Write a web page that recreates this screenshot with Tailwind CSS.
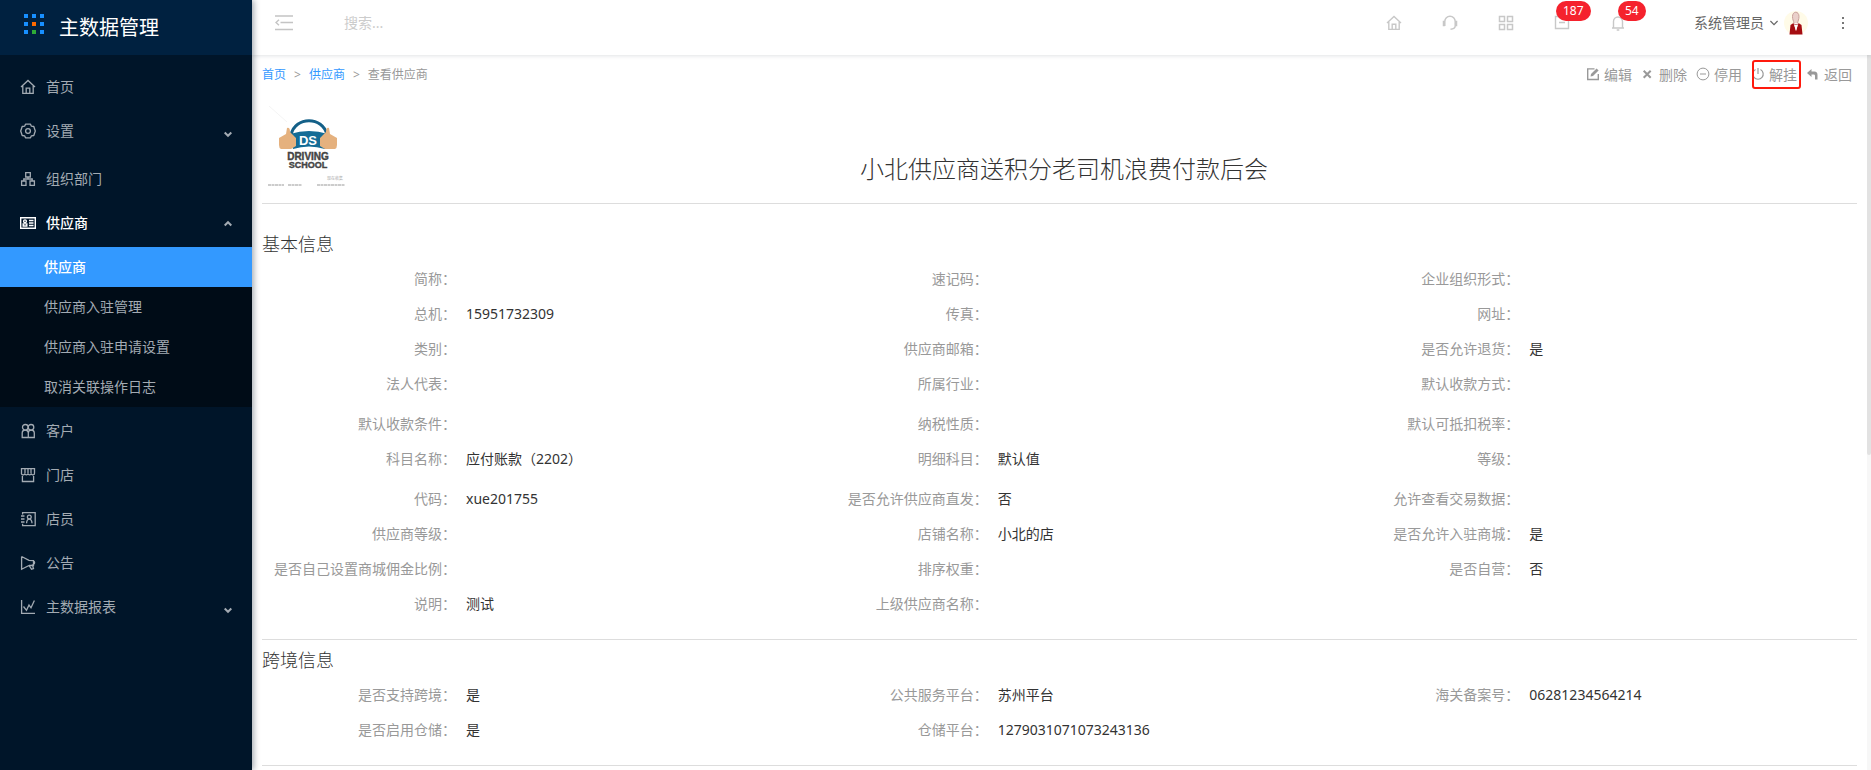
<!DOCTYPE html>
<html lang="zh-CN">
<head>
    <meta charset="utf-8">
    <title>主数据管理</title>
    <meta name="viewport" content="width=device-width, initial-scale=1">
    <script src="https://cdn.jsdelivr.net/npm/@tailwindcss/browser@4"></script>
</head>
<body class="flex h-screen overflow-hidden bg-white font-['Noto_Sans','Noto_Sans_CJK_SC',sans-serif] text-[14px] text-[#333]">

    <!-- sidebar -->
    <aside class="z-20 flex w-[252px] shrink-0 flex-col bg-[#001529] text-[#a3abb3] shadow-[2px_0_6px_rgba(0,21,41,0.35)]">
        <div class="flex h-[55px] items-center gap-[15px] bg-[#002140] pl-6 text-[20px] text-white">
            <svg class="mb-2 h-5 w-5" viewBox="0 0 20 20" fill="#1890ff">
                <path d="M0 0h4v4H0zM8 0h4v4H8zM16 0h4v4h-4zM0 8h4v4H0zM16 8h4v4h-4zM0 16h4v4H0zM16 16h4v4h-4z"/>
                <path d="M8 8h4v4H8z" fill="#ff6a00"/>
                <path d="M8 16h4v4H8z" fill="#2eab37"/>
            </svg>
            <h1>主数据管理</h1>
        </div>
        <nav class="pt-[10px] [&_a]:flex [&_a]:items-center [&_a]:pb-[2px]">
            <a href="#" class="h-11 gap-[10px] pl-5">
                <svg class="mt-[2px] h-4 w-4" viewBox="0 0 16 16" fill="none" stroke="currentColor" stroke-width="1.3"><path d="M1 8l7-6.5L15 8M2.8 7v7.4h10.4V7M6.2 14V9.2h3.6V14"/></svg>
                首页
            </a>
            <a href="#" class="h-11 gap-[10px] pl-5 pr-5">
                <svg class="mt-[2px] h-4 w-4" viewBox="0 0 16 16" fill="none" stroke="currentColor" stroke-width="1.3"><path d="M5.5 1.2h5l.9 2 2.4.3 1.500 4.500-1.500 4.500-2.400.3-.9 2h-5l-.9-2-2.400-.3L.7 8l1.500-4.500 2.400-.3z" stroke-linejoin="round"/><circle cx="8" cy="8" r="2.400"/></svg>
                设置
                <svg class="ml-auto mt-2 h-2 w-2" viewBox="0 0 8 8" fill="none" stroke="currentColor" stroke-width="2"><path d="M.7 2.500L4 5.800l3.300-3.300"/></svg>
            </a>
            <a href="#" class="mt-1 h-11 gap-[10px] pl-5">
                <svg class="mt-[2px] h-4 w-4" viewBox="0 0 16 16" fill="none" stroke="currentColor" stroke-width="1.300"><path d="M5.700 1.600h4.600v4.400H5.700zM1.600 10h4.400v4.400H1.600zM10 10h4.400v4.400H10zM8 6v2M3.800 10V8h8.400v2"/></svg>
                组织部门
            </a>
            <a href="#" class="h-11 gap-[10px] pl-5 pr-5 font-medium text-white">
                <svg class="mt-[2px] h-4 w-4" viewBox="0 0 16 16" fill="none" stroke="currentColor" stroke-width="1.400"><path d="M.7 2.700h14.600v10.600H.7zM9 5.500h4.500M9 8h4.500M9 10.500h4.500"/><circle cx="5" cy="6.300" r="1.400"/><path d="M3.200 11V8.900h3.600V11z"/></svg>
                供应商
                <svg class="ml-auto mt-1 h-2 w-2" viewBox="0 0 8 8" fill="none" stroke="#a3abb3" stroke-width="2"><path d="M.7 5.500L4 2.200l3.300 3.300"/></svg>
            </a>
            <div class="my-[2px] bg-[#000c17] [&>a]:h-10 [&>a]:pl-11">
                <a href="#" class="bg-[#3399ff] font-medium text-white">供应商</a>
                <a href="#">供应商入驻管理</a>
                <a href="#">供应商入驻申请设置</a>
                <a href="#">取消关联操作日志</a>
            </div>
            <a href="#" class="h-11 gap-[10px] pl-5">
                <svg class="mt-[2px] h-4 w-4" viewBox="0 0 16 16" fill="none" stroke="currentColor" stroke-width="1.300"><circle cx="5.300" cy="4.300" r="2.800"/><circle cx="11" cy="4.300" r="2.800"/><path d="M2.200 14.500V10c0-1.800 1.200-2.800 2.900-2.800S8.300 8.200 8.300 10v4.500zM8.300 14.500h6V10c0-1.800-1.400-2.800-3-2.800S8.300 8.200 8.300 10"/></svg>
                客户
            </a>
            <a href="#" class="h-11 gap-[10px] pl-5">
                <svg class="mt-[2px] h-4 w-4" viewBox="0 0 16 16" fill="none" stroke="currentColor" stroke-width="1.300"><path d="M1.500 1.600h13v4.200a1.600 1.600 0 0 1-3.200.8 1.700 1.700 0 0 1-3.300 0 1.700 1.700 0 0 1-3.300 0 1.600 1.600 0 0 1-3.200-.8zM5 1.600v4.600M8 1.600v4.600M11 1.600v4.600M2.400 9v5.500h11.200V9"/></svg>
                门店
            </a>
            <a href="#" class="h-11 gap-[10px] pl-5">
                <svg class="mt-[2px] h-4 w-4" viewBox="0 0 16 16" fill="none" stroke="currentColor" stroke-width="1.300"><path d="M2.600 3.500V1.600h12.600v13H2.600v-1.900M1 5h3.500M1 8h3.500M1 11h3.500"/><circle cx="9.300" cy="6" r="1.900"/><path d="M6.600 12.300c0-5.600 5.400-5.600 5.400 0"/></svg>
                店员
            </a>
            <a href="#" class="h-11 gap-[10px] pl-5">
                <svg class="mt-[2px] h-4 w-4" viewBox="0 0 16 16" fill="none" stroke="currentColor" stroke-width="1.300"><path d="M1.600 1.500v12.800L9 10.500l2.500 3.700 2-.6-1.300-4.200M1.600 1.500L9 5.300l4.500.2v5l-4.500 0M13.500 6.200c1.500.6 1.500 2.600 0 3.200"/></svg>
                公告
            </a>
            <a href="#" class="h-11 gap-[10px] pl-5 pr-5">
                <svg class="mt-[2px] h-4 w-4" viewBox="0 0 16 16" fill="none" stroke="currentColor" stroke-width="1.300"><path d="M1.600 1v13.300H15M3.500 7.500l3 3.800L9 6l2 2.800 3.400-7.300"/></svg>
                主数据报表
                <svg class="ml-auto mt-2 h-2 w-2" viewBox="0 0 8 8" fill="none" stroke="currentColor" stroke-width="2"><path d="M.7 2.500L4 5.800l3.300-3.300"/></svg>
            </a>
        </nav>
    </aside>

    <div class="flex min-w-0 flex-1 flex-col">
        <!-- top bar -->
        <header class="z-10 flex h-[55px] shrink-0 items-center bg-white pb-[10px] pl-[23px] pr-5 shadow-[0_1px_4px_rgba(0,21,41,0.12)]">
            <button type="button" aria-label="收起菜单" class="text-[#c4c4c4]">
                <svg class="h-4 w-[18px]" viewBox="0 0 18 16" fill="none" stroke="currentColor" stroke-width="1.400"><path d="M0 1h18M5.500 7.500H18M0 14.500h18M4 4.800L1 7.500l3 2.700"/></svg>
            </button>
            <input type="text" aria-label="搜索" placeholder="搜索..." class="ml-[51px] w-60 outline-none placeholder:text-[#ccc]">
            <div class="ml-auto flex text-[#c8c8c8] [&>button]:relative [&>button]:flex [&>button]:h-10 [&>button]:w-14 [&>button]:items-center [&>button]:justify-center">
                <button type="button" aria-label="首页">
                    <svg class="h-4 w-4" viewBox="0 0 16 16" fill="none" stroke="currentColor" stroke-width="1.400"><path d="M1 8l7-6.500L15 8M2.800 7v7.400h10.400V7M6.200 14V9.200h3.600V14"/></svg>
                </button>
                <button type="button" aria-label="客服">
                    <svg class="h-4 w-4" viewBox="0 0 16 16" fill="none" stroke="currentColor" stroke-width="1.500"><path d="M2.800 11V6.500a5.200 5.200 0 0 1 10.400 0V11c0 2-1.500 3-4.700 3.300M2.800 6.600H1.500v3.800h1.300M13.200 6.600h1.300v3.800h-1.300"/></svg>
                </button>
                <button type="button" aria-label="应用">
                    <svg class="h-4 w-4" viewBox="0 0 16 16" fill="none" stroke="currentColor" stroke-width="1.500"><path d="M1.500 1.500h5v5h-5zM9.500 1.500h5v5h-5zM1.500 9.500h5v5h-5zM9.500 9.500h5v5h-5z"/></svg>
                </button>
                <button type="button" aria-label="消息 187">
                    <svg class="h-4 w-4" viewBox="0 0 16 16" fill="none" stroke="currentColor" stroke-width="1.400"><path d="M1.500 1.500h13v12h-13zM5 7.500h6"/></svg>
                    <span class="absolute -top-[2px] left-[22px] h-5 rounded-full bg-[#f5222d] px-[7px] text-[12px] leading-5 text-white">187</span>
                </button>
                <button type="button" aria-label="通知 54">
                    <svg class="h-4 w-4" viewBox="0 0 16 16" fill="none" stroke="currentColor" stroke-width="1.400"><path d="M2 13h12M3.500 13V6.500a4.500 4.500 0 0 1 9 0V13M6.700 15h2.600"/></svg>
                    <span class="absolute -top-[2px] left-7 h-5 rounded-full bg-[#f5222d] px-[7px] text-[12px] leading-5 text-white">54</span>
                </button>
            </div>
            <button type="button" class="ml-12 flex items-center text-[#666]">
                系统管理员
                <svg class="ml-[6px] h-2 w-2" viewBox="0 0 8 8" fill="none" stroke="currentColor" stroke-width="1.200"><path d="M.4 2L4 5.600 7.600 2"/></svg>
                <svg class="ml-[6px] h-6 w-6" viewBox="0 0 24 24">
                    <circle cx="12" cy="12" r="12" fill="#fffbe8"/>
                    <path d="M8.500 5.500C8.500-.2 15-.2 15 5.500c0 3-1 4-1.500 7h-3.500c-.5-3-1.500-4-1.500-7z" fill="#ead0ca" stroke="#c9a09a"/>
                    <path d="M9.500 12l-3 2-1 9.500h13l-1-9.500-3-2-2.500 8z" fill="#a50d12"/>
                    <path d="M9.800 12h4.400L12 20z" fill="#fff"/>
                    <path d="M10.500 12.500l3 1.500v-1.500l-3 1.500z" fill="#a50d12"/>
                </svg>
            </button>
            <button type="button" aria-label="更多" class="ml-[27px] text-[#777]">
                <svg class="h-4 w-4" viewBox="0 0 16 16" fill="currentColor"><path d="M7 2h2v2H7zM7 7h2v2H7zM7 12h2v2H7z"/></svg>
            </button>
        </header>

        <div class="flex min-h-0 flex-1">
            <main class="min-w-0 flex-1 overflow-hidden pl-[10px] pr-[10px]">
                <div class="flex h-[38px] items-center justify-between text-[#999]">
                    <nav class="flex items-center pt-[2px] text-[12px]">
                        <a href="#" class="text-[#3399ff]">首页</a>
                        <span class="mx-2">&gt;</span>
                        <a href="#" class="text-[#3399ff]">供应商</a>
                        <span class="mx-2">&gt;</span>
                        <span>查看供应商</span>
                    </nav>
                    <div class="flex gap-[9px] pr-[5px] [&>button]:relative [&>button]:flex [&>button]:items-center [&>button]:gap-1">
                        <button type="button">
                            <svg class="h-[14px] w-[14px]" viewBox="0 0 14 14" fill="none" stroke="currentColor" stroke-width="1.400"><path d="M8.500 1.900H1.700v10.600h10.600V7"/><path d="M5 7l5.600-5.600 2 2L7 9l-2.500.6z" fill="currentColor" stroke="none"/></svg>
                            编辑
                        </button>
                        <button type="button">
                            <svg class="h-[14px] w-[14px]" viewBox="0 0 14 14" fill="none" stroke="currentColor" stroke-width="2"><path d="M2.700 3.700l7 7M9.700 3.700l-7 7"/></svg>
                            删除
                        </button>
                        <button type="button">
                            <svg class="h-[14px] w-[14px]" viewBox="0 0 14 14" fill="none" stroke="currentColor"><circle cx="7" cy="7" r="5.900"/><path d="M4 7h6"/></svg>
                            停用
                        </button>
                        <button type="button">
                            <svg class="h-[14px] w-[14px]" viewBox="0 0 14 14" fill="none" stroke="currentColor" stroke-width="1.200"><path d="M4.500 2.500a5.200 5.200 0 1 0 5 0M7 1v6"/></svg>
                            解挂
                            <span class="absolute -inset-y-1 -right-1 left-[1px] rounded-[3px] border-2 border-[#ff1a0d]"></span>
                        </button>
                        <button type="button">
                            <svg class="h-[14px] w-[14px]" viewBox="0 0 14 14" fill="currentColor"><path d="M1 6l4.500-4v2.500h2.700c2.500 0 3.300 1.500 3.300 3.500v4.500H9V9c0-1-.4-1.500-1.500-1.500h-2V10z"/></svg>
                            返回
                        </button>
                    </div>
                </div>

                <div class="flex h-[111px] items-center border-b border-[#ddd]">
                    <!-- company logo -->
                    <svg class="mb-1 ml-[5px] h-20 w-20" viewBox="0 0 80 80">
                        <path d="M2 0l18 16" stroke="#f4f4f4"/>
                        <path d="M24 29C28 10 56 10 60 29" fill="none" stroke="#146088" stroke-width="3"/>
                        <path d="M23 28q19-6 38 0l-3 15q-16-5-32 0z" fill="#146c96"/>
                        <path d="M12 32l7-4 1-6q3-1 3 4l3 3 3 3v8l-5 3H14q-2-1-2-4zM70 32l-7-4-1-6q-3-1-3 4l-3 3-3 3v8l5 3h10q2-1 2-4z" fill="#e5b17e"/>
                        <text x="41" y="39" text-anchor="middle" font-family="Liberation Sans" font-size="13" font-weight="700" fill="#fff">DS</text>
                        <text x="41" y="54" text-anchor="middle" font-family="Liberation Sans" font-size="10" font-weight="700" fill="#444" stroke="#444" stroke-width=".4">DRIVING</text>
                        <text x="41" y="62" text-anchor="middle" font-family="Liberation Sans" font-size="9" font-weight="700" fill="#444" stroke="#444" stroke-width=".4">SCHOOL</text>
                        <text x="60" y="74" font-family="Noto Sans CJK SC" font-size="4" fill="#aaa">现在收集</text>
                        <path d="M1 79h16M21 79h14M50 79h28" stroke="#999" stroke-dasharray="3 .5"/>
                    </svg>
                    <h2 class="flex-1 pr-[76px] pt-[42px] text-center text-[24px] font-light">小北供应商送积分老司机浪费付款后会</h2>
                </div>

                <!-- basic info -->
                <section class="border-b border-[#ddd] pb-[17px] pt-[23px] [&_dl]:grid [&_dl]:grid-cols-3 [&_dl>div]:flex [&_dl>div]:h-[35px] [&_dl>div]:items-center [&_dl>div]:gap-[10px] [&_dl>div]:pb-[2px] [&_dt]:w-[194px] [&_dt]:text-right [&_dt]:text-[#999]">
                    <h3 class="text-[18px] font-light leading-[35px]">基本信息</h3>
                    <dl>
                        <div><dt>简称：</dt><dd></dd></div>
                        <div><dt>速记码：</dt><dd></dd></div>
                        <div><dt>企业组织形式：</dt><dd></dd></div>
                        <div><dt>总机：</dt><dd>15951732309</dd></div>
                        <div><dt>传真：</dt><dd></dd></div>
                        <div><dt>网址：</dt><dd></dd></div>
                        <div><dt>类别：</dt><dd></dd></div>
                        <div><dt>供应商邮箱：</dt><dd></dd></div>
                        <div><dt>是否允许退货：</dt><dd>是</dd></div>
                        <div><dt>法人代表：</dt><dd></dd></div>
                        <div><dt>所属行业：</dt><dd></dd></div>
                        <div><dt>默认收款方式：</dt><dd></dd></div>
                    </dl>
                    <dl class="mt-[5px]">
                        <div><dt>默认收款条件：</dt><dd></dd></div>
                        <div><dt>纳税性质：</dt><dd></dd></div>
                        <div><dt>默认可抵扣税率：</dt><dd></dd></div>
                        <div><dt>科目名称：</dt><dd>应付账款（2202）</dd></div>
                        <div><dt>明细科目：</dt><dd>默认值</dd></div>
                        <div><dt>等级：</dt><dd></dd></div>
                    </dl>
                    <dl class="mt-[5px]">
                        <div><dt>代码：</dt><dd>xue201755</dd></div>
                        <div><dt>是否允许供应商直发：</dt><dd>否</dd></div>
                        <div><dt>允许查看交易数据：</dt><dd></dd></div>
                        <div><dt>供应商等级：</dt><dd></dd></div>
                        <div><dt>店铺名称：</dt><dd>小北的店</dd></div>
                        <div><dt>是否允许入驻商城：</dt><dd>是</dd></div>
                        <div><dt>是否自己设置商城佣金比例：</dt><dd></dd></div>
                        <div><dt>排序权重：</dt><dd></dd></div>
                        <div><dt>是否自营：</dt><dd>否</dd></div>
                        <div><dt>说明：</dt><dd>测试</dd></div>
                        <div><dt>上级供应商名称：</dt><dd></dd></div>
                    </dl>
                </section>

                <!-- cross-border info -->
                <section class="border-b border-[#ddd] pb-[17px] pt-[3px] [&_dl]:grid [&_dl]:grid-cols-3 [&_dl>div]:flex [&_dl>div]:h-[35px] [&_dl>div]:items-center [&_dl>div]:gap-[10px] [&_dl>div]:pb-[2px] [&_dt]:w-[194px] [&_dt]:text-right [&_dt]:text-[#999]">
                    <h3 class="text-[18px] font-light leading-[35px]">跨境信息</h3>
                    <dl>
                        <div><dt>是否支持跨境：</dt><dd>是</dd></div>
                        <div><dt>公共服务平台：</dt><dd>苏州平台</dd></div>
                        <div><dt>海关备案号：</dt><dd>06281234564214</dd></div>
                        <div><dt>是否启用仓储：</dt><dd>是</dd></div>
                        <div><dt>仓储平台：</dt><dd>1279031071073243136</dd></div>
                    </dl>
                </section>
            </main>
            <!-- scrollbar -->
            <div class="w-1 bg-[#f7f7f7]">
                <div class="h-[56%] rounded-b-sm bg-[#e2e2e2]"></div>
            </div>
        </div>
    </div>
</body>
</html>
